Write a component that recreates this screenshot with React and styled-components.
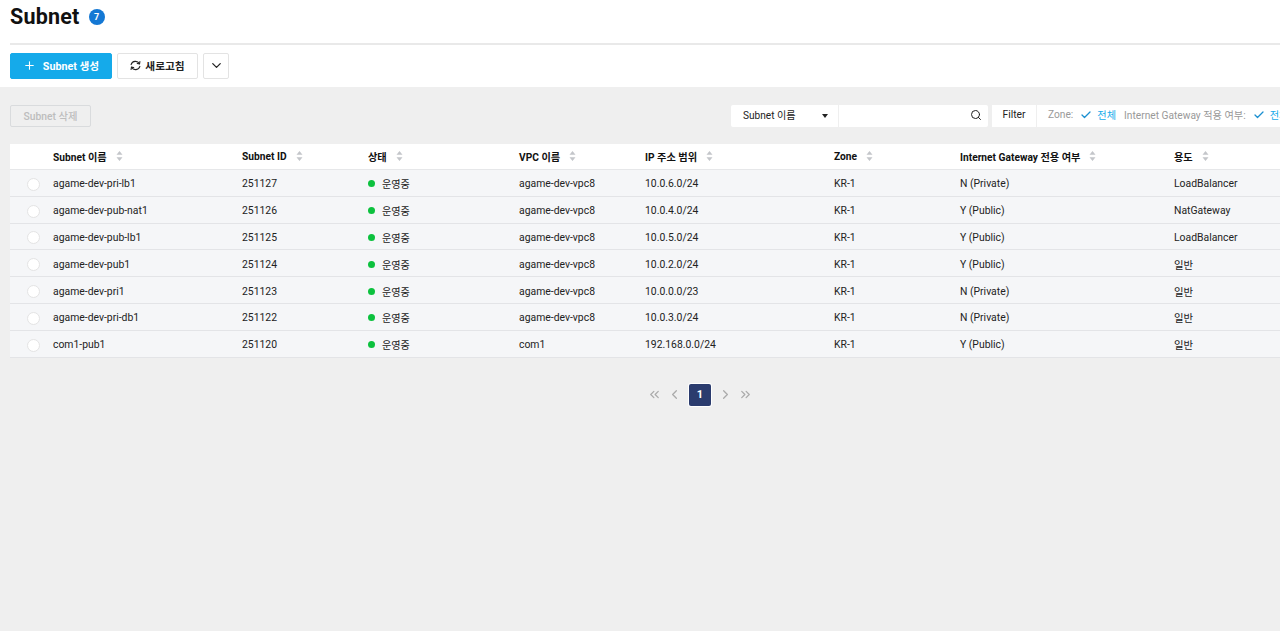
import React from 'react';
import styled, { createGlobalStyle } from 'styled-components';
import { FiPlus, FiChevronDown, FiSearch, FiCheck, FiChevronLeft, FiChevronRight, FiChevronsLeft, FiChevronsRight } from 'react-icons/fi';

const Global = createGlobalStyle`
  html, body {
    margin: 0;
    height: 100%;
    overflow: hidden;
    background: #efefef;
    font-family: Roboto, "Noto Sans CJK KR", sans-serif;
    font-size: 11px;
    color: #222;
  }
  #root { height: 100%; }
`;

const Page = styled.div`
  width: 1280px;
  height: 631px;
  overflow: hidden;
`;

const Top = styled.div`
  background: #fff;
  padding-left: 10px;
  height: 87px;
`;

const TitleRow = styled.div`
  height: 45px;
  display: flex;
  align-items: flex-start;
  padding-top: 4px;
  box-sizing: border-box;
  border-bottom: 2px solid #e9e9e9;
`;

const Title = styled.h1`
  margin: 0;
  font-size: 21.5px;
  line-height: 26px;
  font-weight: 700;
  color: #111;
  letter-spacing: 0.2px;
`;

const Count = styled.span`
  width: 16px;
  height: 16px;
  margin: 5px 0 0 9px;
  border-radius: 50%;
  background: #1478d4;
  color: #fff;
  font-size: 9px;
  font-weight: 700;
  display: flex;
  align-items: center;
  justify-content: center;
`;

const Toolbar = styled.div`
  display: flex;
  gap: 5px;
  padding-top: 8px;
`;

const Button = styled.button`
  height: 26px;
  padding: 0 0 1px;
  box-sizing: border-box;
  width: ${p => p.$w}px;
  border-radius: 2px;
  border: 1px solid ${p => (p.$primary ? '#15aaea' : '#e3e3e3')};
  background: ${p => (p.$primary ? '#15aaea' : '#fff')};
  color: ${p => (p.$primary ? '#fff' : '#222')};
  font: 700 10.7px Roboto, "Noto Sans CJK KR", sans-serif;
  display: flex;
  align-items: center;
  justify-content: center;
  gap: ${p => p.$gap || 0}px;
`;

const RefreshIcon = styled.svg`
  width: 11px;
  height: 11px;
  fill: none;
  stroke: #222;
  stroke-width: 1.2;
  stroke-linecap: round;
  stroke-linejoin: round;
`;

const FilterBar = styled.div`
  height: 22px;
  margin: 18px 0 17px 10px;
  display: flex;
  align-items: stretch;
`;

const DeleteButton = styled.button`
  width: 81px;
  height: 22px;
  box-sizing: border-box;
  padding: 0 0 1px;
  background: #efefef;
  border: 1px solid #d9dbdd;
  border-radius: 2px;
  color: #bdbdbd;
  font: 500 10.3px Roboto, "Noto Sans CJK KR", sans-serif;
`;

const Select = styled.div`
  margin-left: 640px;
  width: 107px;
  padding: 0 10px 3px 12px;
  box-sizing: border-box;
  background: #fff;
  border-radius: 2px 0 0 2px;
  display: flex;
  align-items: center;
  justify-content: space-between;
  color: #222;
  font-size: 10.1px;
`;

const Caret = styled.span`
  width: 0;
  height: 0;
  margin-top: 2px;
  border-left: 3px solid transparent;
  border-right: 3px solid transparent;
  border-top: 4px solid #222;
`;

const SearchBox = styled.div`
  margin-left: 1px;
  width: 149px;
  padding: 0 6px 2px 0;
  box-sizing: border-box;
  background: #fff;
  border-radius: 0 2px 2px 0;
  display: flex;
  align-items: center;
  justify-content: flex-end;
  color: #222;
`;

const FilterLabel = styled.div`
  margin-left: 4px;
  width: 44px;
  padding-bottom: 3px;
  box-sizing: border-box;
  background: #fff;
  display: flex;
  align-items: center;
  justify-content: center;
  font-size: 10.3px;
  color: #222;
`;

const FilterValues = styled.div`
  margin-left: 1px;
  flex: 1;
  padding: 0 0 3px 11px;
  background: #fff;
  display: flex;
  align-items: center;
  white-space: nowrap;
  overflow: hidden;
  font-size: 10.2px;
  color: #999;
`;

const FilterOn = styled.span`
  color: #15aaea;
  display: inline-flex;
  align-items: center;
  gap: 5px;
  margin: 0 8px 0 7px;

  svg {
    stroke-width: 2.6;
    color: #1a8fd0;
  }
`;

const Table = styled.div`
  margin-left: 10px;
  width: 1300px;
`;

const cols = '43px 189px 126px 151px 126px 189px 126px 214px 1fr';

const HeadRow = styled.div`
  display: grid;
  grid-template-columns: ${cols};
  height: 24px;
  padding-bottom: 1px;
  align-items: center;
  background: #fff;
  font-weight: 700;
  font-size: 10.2px;
  color: #111;
  border-bottom: 1px solid #e6e7e9;
`;

const Row = styled.div`
  display: grid;
  grid-template-columns: ${cols};
  height: 23.8px;
  padding-top: 2px;
  align-items: center;
  background: #f5f6f8;
  border-bottom: 1px solid #e3e4e7;
  font-size: 10.4px;
  color: #222;
`;

const HeadCell = styled.div`
  display: flex;
  align-items: center;
  gap: 9px;
`;

const SortIcon = styled.svg`
  width: 7px;
  height: 10px;
  fill: #c4c6ca;
`;

const Radio = styled.span`
  width: 11px;
  height: 11px;
  margin-left: 17px;
  margin-top: 1px;
  border-radius: 50%;
  background: #fff;
  border: 1px solid #e4e4e4;
`;

const Status = styled.div`
  display: flex;
  align-items: center;
  gap: 7px;
  font-size: 10.1px;
`;

const Dot = styled.span`
  width: 7px;
  height: 7px;
  border-radius: 50%;
  background: #0cc13e;
`;

const Pager = styled.div`
  margin-top: 26px;
  margin-left: 10px;
  width: 1380px;
  display: flex;
  justify-content: center;
  align-items: center;
  gap: 5px;
  color: #aaa;
`;

const PageArrow = styled.span`
  width: 15px;
  display: flex;
  justify-content: center;
  font-size: 15px;
`;

const PageNo = styled.span`
  width: 22px;
  height: 22px;
  margin: 0 2px;
  border-radius: 2px;
  background: #2b3c6e;
  box-shadow: 0 0 0 1px #fff;
  color: #fff;
  font-weight: 700;
  font-size: 11px;
  display: flex;
  align-items: center;
  justify-content: center;
`;

const rows = [
  ['agame-dev-pri-lb1', '251127', 'agame-dev-vpc8', '10.0.6.0/24', 'N (Private)', 'LoadBalancer'],
  ['agame-dev-pub-nat1', '251126', 'agame-dev-vpc8', '10.0.4.0/24', 'Y (Public)', 'NatGateway'],
  ['agame-dev-pub-lb1', '251125', 'agame-dev-vpc8', '10.0.5.0/24', 'Y (Public)', 'LoadBalancer'],
  ['agame-dev-pub1', '251124', 'agame-dev-vpc8', '10.0.2.0/24', 'Y (Public)', '일반'],
  ['agame-dev-pri1', '251123', 'agame-dev-vpc8', '10.0.0.0/23', 'N (Private)', '일반'],
  ['agame-dev-pri-db1', '251122', 'agame-dev-vpc8', '10.0.3.0/24', 'N (Private)', '일반'],
  ['com1-pub1', '251120', 'com1', '192.168.0.0/24', 'Y (Public)', '일반'],
];

const heads = ['Subnet 이름', 'Subnet ID', '상태', 'VPC 이름', 'IP 주소 범위', 'Zone', 'Internet Gateway 전용 여부', '용도'];

const Sort = () => (
  <SortIcon viewBox="0 0 7 10">
    <path d="M3.5 0 6.5 3.8H.5zM3.5 10 .5 6.2h6z" />
  </SortIcon>
);

const Refresh = () => (
  <RefreshIcon viewBox="0 0 12 12">
    <path d="M1.2 5A5 5 0 0 1 10.3 4M10.8 7A5 5 0 0 1 1.7 8" />
    <path d="M10.8 1.6 10.4 4.2 7.9 3.8M1.2 10.4 1.6 7.8 4.1 8.2" />
  </RefreshIcon>
);

export default function App() {
  return (
    <Page>
      <Global />
      <Top>
        <TitleRow>
          <Title>Subnet</Title>
          <Count>7</Count>
        </TitleRow>
        <Toolbar>
          <Button $primary $w={102} $gap={7}><FiPlus size={13} /> Subnet 생성</Button>
          <Button $w={81} $gap={4}><Refresh /> 새로고침</Button>
          <Button $w={26}><FiChevronDown size={15} /></Button>
        </Toolbar>
      </Top>
      <FilterBar>
        <DeleteButton disabled>Subnet 삭제</DeleteButton>
        <Select>Subnet 이름 <Caret /></Select>
        <SearchBox><FiSearch size={12} /></SearchBox>
        <FilterLabel>Filter</FilterLabel>
        <FilterValues>
          Zone:
          <FilterOn><FiCheck size={12} /> 전체</FilterOn>
          Internet Gateway 적용 여부:
          <FilterOn><FiCheck size={12} /> 전체</FilterOn>
        </FilterValues>
      </FilterBar>
      <Table>
        <HeadRow>
          <span />
          {heads.map(h => (
            <HeadCell key={h}>{h} <Sort /></HeadCell>
          ))}
        </HeadRow>
        {rows.map(r => (
          <Row key={r[0]}>
            <Radio />
            <div>{r[0]}</div>
            <div>{r[1]}</div>
            <Status><Dot /> 운영중</Status>
            <div>{r[2]}</div>
            <div>{r[3]}</div>
            <div>KR-1</div>
            <div>{r[4]}</div>
            <div>{r[5]}</div>
          </Row>
        ))}
      </Table>
      <Pager>
        <PageArrow><FiChevronsLeft /></PageArrow>
        <PageArrow><FiChevronLeft /></PageArrow>
        <PageNo>1</PageNo>
        <PageArrow><FiChevronRight /></PageArrow>
        <PageArrow><FiChevronsRight /></PageArrow>
      </Pager>
    </Page>
  );
}
